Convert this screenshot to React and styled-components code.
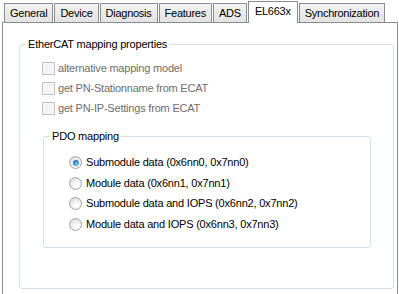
import React from "react";
import styled, { createGlobalStyle, css } from "styled-components";

const Global = createGlobalStyle`
  html, body { margin: 0; padding: 0; background: #ffffff; }
  body { font-family: "Liberation Sans", Arial, sans-serif; font-size: 11px; }
`;

const Window = styled.div`
  width: 399px;
  height: 294px;
  overflow: hidden;
  background: #ffffff;
  color: #000000;
  font-family: "Liberation Sans", Arial, sans-serif;
  font-size: 11px;
`;

const TabStrip = styled.div`
  display: flex;
  align-items: flex-end;
  gap: 1px;
  height: 22px;
  padding-left: 4px;
  position: relative;
  z-index: 2;
`;

const Tab = styled.div`
  box-sizing: border-box;
  height: 19px;
  padding: 1px 5px 0;
  display: flex;
  align-items: center;
  border: 1px solid #898c95;
  border-bottom: none;
  background: linear-gradient(#f3f3f3, #e3e3e3);
  white-space: nowrap;
  line-height: 13px;
  letter-spacing: -0.25px;
  ${(p) =>
    p.$active &&
    css`
      height: 22px;
      margin-bottom: -1px;
      padding: 0 6px 2px;
      background: #ffffff;
    `}
`;

const Panel = styled.div`
  box-sizing: border-box;
  margin-left: 2px;
  width: 396px;
  height: 280px;
  border: 1px solid #898c95;
  background: #ffffff;
  padding: 21px 2px 0 16px;
`;

const Group = styled.div`
  position: relative;
  box-sizing: border-box;
  border: 1px solid #d5dfe5;
  border-radius: 3px;
  display: flex;
  flex-direction: column;
`;

const OuterGroup = styled(Group)`
  width: 375px;
  padding: 17px 0 40px 22px;
  gap: 7px;
`;

const PdoGroup = styled(Group)`
  width: 328px;
  margin-top: 14px;
  margin-left: 1px;
  padding: 19px 0 16px 25px;
  gap: 7.7px;
`;

const Legend = styled.span`
  position: absolute;
  top: -7px;
  left: 6px;
  padding: 0 2px;
  background: #ffffff;
  line-height: 13px;
  letter-spacing: -0.2px;
`;

const Row = styled.label`
  display: flex;
  align-items: center;
  height: 13px;
  gap: 3px;
  color: ${(p) => (p.$disabled ? "#6d6d6d" : "#000000")};
  line-height: 13px;
  letter-spacing: -0.2px;
`;

const CheckBox = styled.span`
  box-sizing: border-box;
  width: 13px;
  height: 13px;
  flex: none;
  border: 1px solid #c2c2c2;
  background: #f4f4f4;
  box-shadow: inset 0 0 0 1px #f8f8f8;
`;

const Radio = styled.span`
  box-sizing: border-box;
  position: relative;
  width: 13px;
  height: 13px;
  flex: none;
  border-radius: 50%;
  border: 1px solid #a3a3a3;
  background: radial-gradient(circle at 65% 70%, #ffffff 0%, #f2f2f2 40%, #d4d4d4 100%);
  margin-right: 1px;
  ${(p) =>
    p.$checked &&
    css`
      &::after {
        content: "";
        position: absolute;
        left: 2.5px;
        top: 2.5px;
        width: 6px;
        height: 6px;
        border-radius: 50%;
        background: radial-gradient(circle at 60% 65%, #8fd0f5 0%, #3c8fd0 45%, #184e7e 100%);
      }
    `}
`;

const tabs = ["General", "Device", "Diagnosis", "Features", "ADS", "EL663x", "Synchronization"];

const checks = [
  "alternative mapping model",
  "get PN-Stationname from ECAT",
  "get PN-IP-Settings from ECAT",
];

const radios = [
  "Submodule data (0x6nn0, 0x7nn0)",
  "Module data (0x6nn1, 0x7nn1)",
  "Submodule data and IOPS (0x6nn2, 0x7nn2)",
  "Module data and IOPS (0x6nn3, 0x7nn3)",
];

export default function App() {
  return (
    <Window>
      <Global />
      <TabStrip>
        {tabs.map((t) => (
          <Tab key={t} $active={t === "EL663x"}>
            {t}
          </Tab>
        ))}
      </TabStrip>
      <Panel>
        <OuterGroup>
          <Legend>EtherCAT mapping properties</Legend>
          {checks.map((c) => (
            <Row key={c} $disabled>
              <CheckBox />
              {c}
            </Row>
          ))}
          <PdoGroup>
            <Legend>PDO mapping</Legend>
            {radios.map((r, i) => (
              <Row key={r}>
                <Radio $checked={i === 0} />
                {r}
              </Row>
            ))}
          </PdoGroup>
        </OuterGroup>
      </Panel>
    </Window>
  );
}
